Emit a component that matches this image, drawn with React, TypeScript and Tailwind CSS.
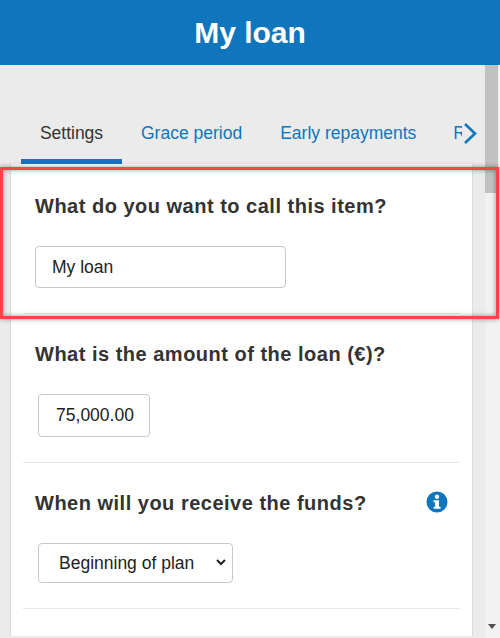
const App = () => {
  return (
    <div className="relative w-[500px] h-[638px] overflow-hidden bg-[#ebebeb] font-['Liberation_Sans',Arial,sans-serif]">
      <header className="h-[65px] bg-[#0f75bc] flex items-center justify-center">
        <h1 className="text-[30px] font-bold text-white">My loan</h1>
      </header>

      <div className="flex h-[573px]">
        <div className="w-[485px] flex flex-col">
          {/* Tabs */}
          <nav className="relative h-[99px] pt-[55px] pl-[21px] flex items-start text-[17.5px] overflow-hidden shrink-0">
            <a className="w-[101px] h-[44px] text-center text-[#333333] border-b-[5px] border-[#0f75bc] shrink-0">Settings</a>
            <a className="ml-[19px] text-[#0f75bc] shrink-0">Grace period</a>
            <a className="ml-[38px] text-[#0f75bc] shrink-0">Early repayments</a>
            <a className="ml-[37px] text-[#0f75bc] shrink-0 w-[9px] overflow-hidden">Rates</a>
            <svg className="absolute left-[463px] top-[57px]" width="14" height="22" viewBox="0 0 14 22" fill="none">
              <path d="M2 2l10 9.5-10 9.5" stroke="#0f75bc" strokeWidth="2.6" />
            </svg>
          </nav>

          {/* Form card */}
          <div className="ml-[10px] w-[463px] flex-1 bg-white border-x border-[#dcdcdc] px-[12px]">
            <section className="h-[150px] pt-[28px] border-b border-[#e6e6e6]">
              <h2 className="ml-[12px] text-[20px] leading-[28px] font-bold tracking-[0.5px] text-[#333333]">What do you want to call this item?</h2>
              <input
                readOnly
                value="My loan"
                className="block mt-[26px] ml-[12px] w-[251px] h-[42px] px-4 text-[17.5px] text-[#222222] border border-[#c8c8c8] rounded-[4px]"
              />
            </section>

            <section className="h-[149px] pt-[26px] border-b border-[#e6e6e6]">
              <h2 className="ml-[12px] text-[20px] leading-[28px] font-bold tracking-[0.5px] text-[#333333]">What is the amount of the loan (€)?</h2>
              <input
                readOnly
                value="75,000.00"
                className="block mt-[26px] ml-[15px] w-[112px] h-[43px] pl-[2px] text-center text-[17.5px] text-[#222222] border border-[#c8c8c8] rounded-[4px]"
              />
            </section>

            <section className="h-[146px] pt-[26px] border-b border-[#e6e6e6]">
              <div className="flex items-start justify-between pr-[12px]">
                <h2 className="ml-[12px] text-[20px] leading-[28px] font-bold tracking-[0.5px] text-[#333333]">When will you receive the funds?</h2>
                <svg width="22" height="22" viewBox="0 0 22 22" className="mt-[2px]">
                  <circle cx="11" cy="11" r="10.5" fill="#0f75bc" />
                  <circle cx="11" cy="5.8" r="2.2" fill="#ffffff" />
                  <path d="M7.6 9.2h5.4v6.6h1.5v2H7.6v-2h1.5v-4.6H7.6z" fill="#ffffff" />
                </svg>
              </div>
              <div className="relative mt-[26px] ml-[15px] w-[195px] h-[40px] flex items-center pl-[20px] text-[17.5px] text-[#222222] border border-[#c8c8c8] rounded-[4px]">
                Beginning of plan
                <svg className="absolute right-[6px] top-[15px]" width="10" height="7" viewBox="0 0 10 7" fill="none">
                  <path d="M1 1l4 4 4-4" stroke="#222222" strokeWidth="2" />
                </svg>
              </div>
            </section>
          </div>
          <div className="h-[2px] shrink-0" />
        </div>

        {/* Scrollbar */}
        <div className="relative w-[15px] bg-[#f1f1f1]">
          <div className="w-[13px] h-[128px] bg-[#c1c1c1]" />
          <svg className="absolute left-[3px] bottom-[9px]" width="8" height="5" viewBox="0 0 8 5">
            <path d="M0 0h8L4 5z" fill="#505050" />
          </svg>
        </div>
      </div>

      {/* Highlight box */}
      <div className="absolute left-0 top-[167px] w-[499px] h-[152px] border-[3px] border-[#fb4348] shadow-[0_0_5px_rgba(0,0,0,0.4),inset_0_0_5px_rgba(0,0,0,0.4)]" />
    </div>
  )
}

export default App
